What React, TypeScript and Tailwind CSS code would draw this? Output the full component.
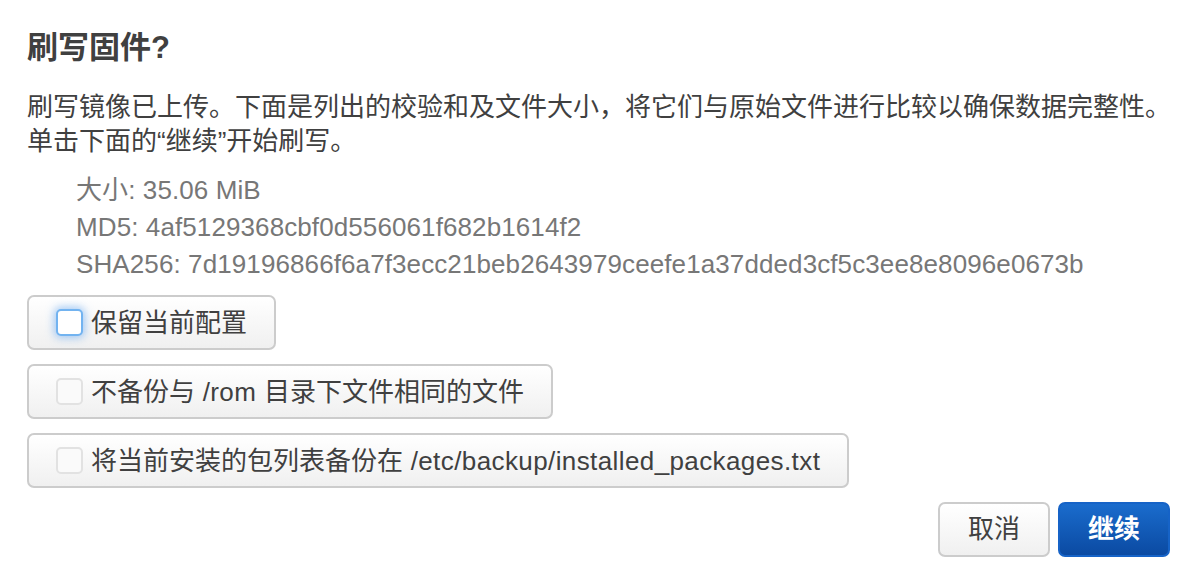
import React from 'react';

const font = { fontFamily: '"Liberation Sans", "Noto Sans CJK SC", sans-serif' };

const options = [
  { id: 'keep', parts: ['保留当前配置'], focused: true },
  { id: 'skip', parts: ['不备份与', ' /rom ', '目录下文件相同的文件'], focused: false },
  { id: 'pkgs', parts: ['将当前安装的包列表备份在', ' /etc/backup/installed_packages.txt'], focused: false },
];

const App = () => {
  return (
    <div className="w-[1196px] h-[578px] bg-white pt-[28px] pl-[27px] pr-[26px] text-[#404040]" style={font}>
      {/* Title */}
      <h3 className="text-[31px] leading-[40px] font-bold text-[#404040]">刷写固件?</h3>

      {/* Description */}
      <p className="mt-[22px] text-[26px] leading-[34px] whitespace-nowrap">
        刷写镜像已上传。下面是列出的校验和及文件大小，将它们与原始文件进行比较以确保数据完整性。
        <br />
        单击下面的“继续”开始刷写。
      </p>

      {/* Checksums */}
      <ul className="mt-[14px] pl-[49px] text-[26px] leading-[37px] text-[#777] tracking-[0.1px]">
        <li>大小: 35.06 MiB</li>
        <li>MD5: 4af5129368cbf0d556061f682b1614f2</li>
        <li>SHA256: 7d19196866f6a7f3ecc21beb2643979ceefe1a37dded3cf5c3ee8e8096e0673b</li>
      </ul>

      {/* Options */}
      <div className="mt-[12px] flex flex-col items-start gap-[14px]">
        {options.map((opt) => (
          <label
            key={opt.id}
            className="inline-flex items-center h-[55px] pl-[27px] pr-[27px] border-2 border-[#cccccc] rounded-[7px] bg-gradient-to-b from-white to-[#f0f0f0] text-[26px] leading-[34px] text-[#404040] whitespace-pre"
          >
            <span
              className={
                opt.focused
                  ? 'w-[27px] h-[27px] mr-[8px] rounded-[5px] border-2 border-[#72b3f0] bg-white shadow-[0_0_8px_2px_rgba(90,160,240,0.55)]'
                  : 'w-[27px] h-[27px] mr-[8px] rounded-[5px] border-2 border-[#e2e2e2] bg-[#fafafa]'
              }
            />
            {opt.parts.map((p, i) =>
              /[a-z/]/.test(p) ? (
                <span key={i} className="tracking-[0.4px]">{p}</span>
              ) : (
                <span key={i}>{p}</span>
              )
            )}
          </label>
        ))}
      </div>

      {/* Actions */}
      <div className="mt-[14px] flex justify-end gap-[8px]">
        <button className="h-[55px] px-[28px] border-2 border-[#cccccc] rounded-[7px] bg-gradient-to-b from-white to-[#f0f0f0] text-[26px] text-[#404040]">
          取消
        </button>
        <button className="h-[55px] px-[28px] border-2 border-[#1663c7] rounded-[7px] bg-gradient-to-b from-[#1a6ccd] to-[#0b4aa2] text-[26px] font-bold text-white">
          继续
        </button>
      </div>
    </div>
  );
};

export default App;
